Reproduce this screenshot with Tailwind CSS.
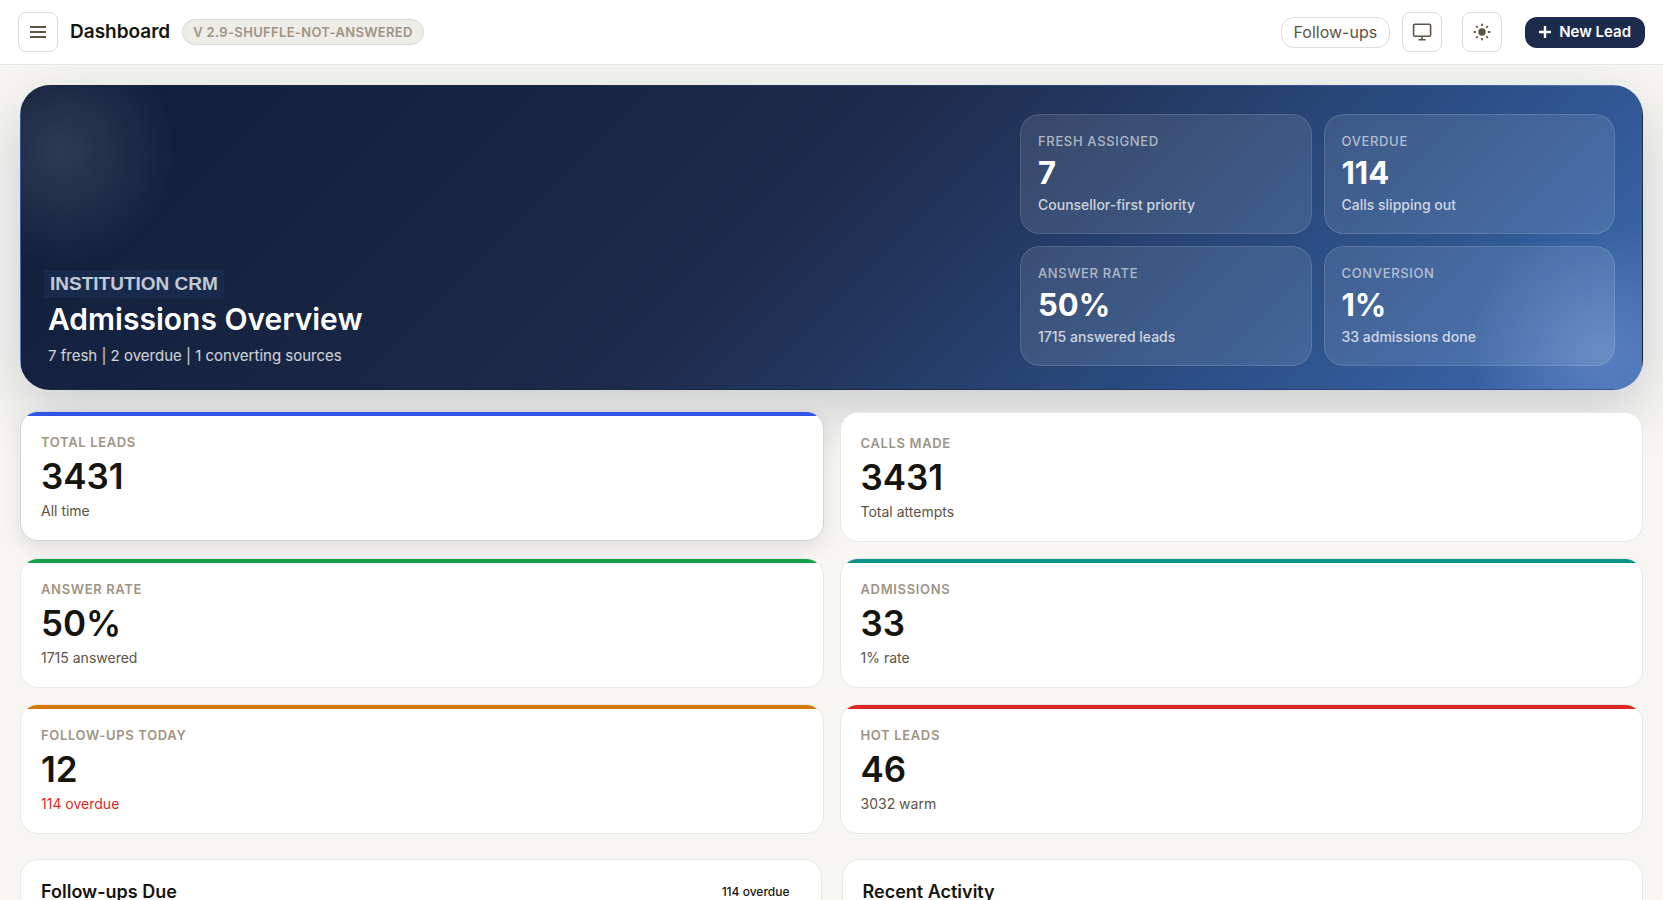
<!DOCTYPE html>
<html lang="en">
<head>
    <meta charset="UTF-8">
    <meta name="viewport" content="width=device-width, initial-scale=1.0">
    <title>Dashboard</title>
    <script src="https://cdn.jsdelivr.net/npm/@tailwindcss/browser@4"></script>
</head>
<body class="flex h-screen flex-col overflow-hidden bg-[#f7f6f2] font-['Inter',sans-serif] text-[#16140f]">

    <!-- Top bar -->
    <header class="relative z-10 flex shrink-0 items-center justify-between border-b border-[#e6e6e6] bg-white px-[18px] py-3">
        <div class="flex items-center gap-3">
            <button type="button" aria-label="Menu" class="flex size-10 items-center justify-center rounded-lg border border-[#dcdcdc] text-[#5c5346]">
                <svg class="size-4" viewBox="0 0 16 16" fill="none" stroke="currentColor" stroke-width="2"><path d="M0 3h16M0 8h16M0 13h16"/></svg>
            </button>
            <h1 class="text-[19px] font-semibold">Dashboard</h1>
            <span class="rounded-full border border-[#dcdad3] bg-[#eeede8] px-[10px] text-[13px] leading-6 font-semibold tracking-wide text-[#a09484]">V 2.9-SHUFFLE-NOT-ANSWERED</span>
        </div>
        <div class="flex items-center">
            <a href="#followups" class="mr-3 rounded-[13px] border border-[#dcdcdc] px-3 text-base leading-[29px] text-[#5c5346]">Follow-ups</a>
            <button type="button" aria-label="Display mode" class="mr-5 flex size-10 items-center justify-center rounded-lg border border-[#dcdcdc] text-[#5c5346]">
                <svg class="size-5" viewBox="0 0 20 20" fill="none" stroke="currentColor" stroke-width="1.6"><rect x="1.6" y="2.2" width="17" height="12" rx="1.2"/><path d="M10 14.2v3M6.5 17.7h7"/></svg>
            </button>
            <button type="button" aria-label="Light theme" class="mr-[23px] flex size-10 items-center justify-center rounded-lg border border-[#dcdcdc] text-[#5c5346]">
                <svg class="size-5" viewBox="0 0 20 20" fill="currentColor"><circle cx="10" cy="10" r="3.7"/><path d="M10 1.7v2.2M10 16.1v2.2M1.7 10h2.2M16.1 10h2.2M4.2 4.2l1.5 1.5M14.3 14.3l1.5 1.5M4.2 15.8l1.5-1.5M14.3 5.7l1.5-1.5" stroke="currentColor" stroke-width="1.8"/></svg>
            </button>
            <button type="button" class="flex h-[31px] items-center gap-2 rounded-xl bg-[#1c2b4b] px-[14px] text-[15px] font-semibold text-white">
                <svg class="size-3" viewBox="0 0 12 12" fill="none" stroke="currentColor" stroke-width="2.4"><path d="M6 0v12M0 6h12"/></svg>
                New Lead
            </button>
        </div>
    </header>

    <main class="px-5 pt-5">

        <!-- Hero -->
        <section class="grid grid-cols-[1.6fr_1fr] gap-5 rounded-[30px] border border-transparent bg-[radial-gradient(circle_at_40px_64px,rgba(255,255,255,0.12),transparent_115px),radial-gradient(circle_at_calc(100%-40px)_calc(100%-36px),rgba(150,175,225,0.34),transparent_135px),linear-gradient(135deg,#0f1e3a_0%,#1d2a49_46%,#2b4d83_75%,#3b6bb3_100%)] px-[27px] pt-7 pb-[23px] shadow-[0_20px_60px_rgba(15,30,58,0.2)]">
            <div class="flex flex-col items-start justify-end">
                <p class="-ml-1 bg-[#182a4b] px-[6px] font-['Liberation_Sans',sans-serif] text-[19px] leading-7 font-bold text-[#c2c8d4]">INSTITUTION CRM</p>
                <h2 class="text-[30px] leading-[42px] font-semibold text-white">Admissions Overview</h2>
                <p class="mt-1.5 text-[15px] leading-5 text-white/80">7 fresh | 2 overdue | 1 converting sources</p>
            </div>
            <div class="grid grid-cols-2 gap-3">
                <article class="rounded-[20px] border border-white/12 bg-white/10 px-[17px] pt-4 pb-[18px]">
                    <p class="text-[13px] leading-5 font-medium tracking-wider text-white/60">FRESH ASSIGNED</p>
                    <p class="text-[31px] leading-[44px] font-bold text-white">7</p>
                    <p class="text-sm leading-5 font-medium text-white/75">Counsellor-first priority</p>
                </article>
                <article class="rounded-[20px] border border-white/12 bg-white/10 px-[17px] pt-4 pb-[18px]">
                    <p class="text-[13px] leading-5 font-medium tracking-wider text-white/60">OVERDUE</p>
                    <p class="text-[31px] leading-[44px] font-bold text-white">114</p>
                    <p class="text-sm leading-5 font-medium text-white/75">Calls slipping out</p>
                </article>
                <article class="rounded-[20px] border border-white/12 bg-white/10 px-[17px] pt-4 pb-[18px]">
                    <p class="text-[13px] leading-5 font-medium tracking-wider text-white/60">ANSWER RATE</p>
                    <p class="text-[31px] leading-[44px] font-bold text-white">50%</p>
                    <p class="text-sm leading-5 font-medium text-white/75">1715 answered leads</p>
                </article>
                <article class="rounded-[20px] border border-white/12 bg-white/10 px-[17px] pt-4 pb-[18px]">
                    <p class="text-[13px] leading-5 font-medium tracking-wider text-white/60">CONVERSION</p>
                    <p class="text-[31px] leading-[44px] font-bold text-white">1%</p>
                    <p class="text-sm leading-5 font-medium text-white/75">33 admissions done</p>
                </article>
            </div>
        </section>

        <!-- KPI cards -->
        <section class="mt-[22px] grid grid-cols-2 gap-4">
            <article class="-translate-y-px overflow-hidden rounded-[18px] border border-[#d6d6d6] bg-white shadow-[0_6px_20px_rgba(0,0,0,0.1)]">
                <div class="h-1 bg-[#2f55e6]"></div>
                <div class="px-5 pt-4 pb-[18px]">
                    <p class="text-[13px] leading-5 font-semibold tracking-wider text-[#a09484]">TOTAL LEADS</p>
                    <p class="text-[35px] leading-[48px] font-semibold">3431</p>
                    <p class="text-sm leading-[22px] text-[#5c5346]">All time</p>
                </div>
            </article>
            <article class="overflow-hidden rounded-[18px] border border-[#e8e8e8] bg-white">
                <div class="h-1"></div>
                <div class="px-5 pt-4 pb-[18px]">
                    <p class="text-[13px] leading-5 font-semibold tracking-wider text-[#a09484]">CALLS MADE</p>
                    <p class="text-[35px] leading-[48px] font-semibold">3431</p>
                    <p class="text-sm leading-[22px] text-[#5c5346]">Total attempts</p>
                </div>
            </article>
            <article class="overflow-hidden rounded-[18px] border border-[#e8e8e8] bg-white">
                <div class="h-1 bg-[#16a34a]"></div>
                <div class="px-5 pt-4 pb-[18px]">
                    <p class="text-[13px] leading-5 font-semibold tracking-wider text-[#a09484]">ANSWER RATE</p>
                    <p class="text-[35px] leading-[48px] font-semibold">50%</p>
                    <p class="text-sm leading-[22px] text-[#5c5346]">1715 answered</p>
                </div>
            </article>
            <article class="overflow-hidden rounded-[18px] border border-[#e8e8e8] bg-white">
                <div class="h-1 bg-[#0d9488]"></div>
                <div class="px-5 pt-4 pb-[18px]">
                    <p class="text-[13px] leading-5 font-semibold tracking-wider text-[#a09484]">ADMISSIONS</p>
                    <p class="text-[35px] leading-[48px] font-semibold">33</p>
                    <p class="text-sm leading-[22px] text-[#5c5346]">1% rate</p>
                </div>
            </article>
            <article class="overflow-hidden rounded-[18px] border border-[#e8e8e8] bg-white">
                <div class="h-1 bg-[#d97706]"></div>
                <div class="px-5 pt-4 pb-[18px]">
                    <p class="text-[13px] leading-5 font-semibold tracking-wider text-[#a09484]">FOLLOW-UPS TODAY</p>
                    <p class="text-[35px] leading-[48px] font-semibold">12</p>
                    <p class="text-sm leading-[22px] text-[#dc2626]">114 overdue</p>
                </div>
            </article>
            <article class="overflow-hidden rounded-[18px] border border-[#e8e8e8] bg-white">
                <div class="h-1 bg-[#dc2626]"></div>
                <div class="px-5 pt-4 pb-[18px]">
                    <p class="text-[13px] leading-5 font-semibold tracking-wider text-[#a09484]">HOT LEADS</p>
                    <p class="text-[35px] leading-[48px] font-semibold">46</p>
                    <p class="text-sm leading-[22px] text-[#5c5346]">3032 warm</p>
                </div>
            </article>
        </section>

        <!-- Lists -->
        <section class="mt-[25px] grid grid-cols-2 gap-5">
            <article id="followups" class="min-h-40 rounded-[18px] border border-[#e8e8e8] bg-white px-5 py-[18px]">
                <div class="flex items-center justify-between">
                    <h3 class="text-lg leading-7 font-semibold">Follow-ups Due</h3>
                    <span class="px-[11px] text-xs font-medium">114 overdue</span>
                </div>
            </article>
            <article class="min-h-40 rounded-[18px] border border-[#e8e8e8] bg-white px-5 py-[18px]">
                <h3 class="text-lg leading-7 font-semibold">Recent Activity</h3>
            </article>
        </section>
    </main>

</body>
</html>
